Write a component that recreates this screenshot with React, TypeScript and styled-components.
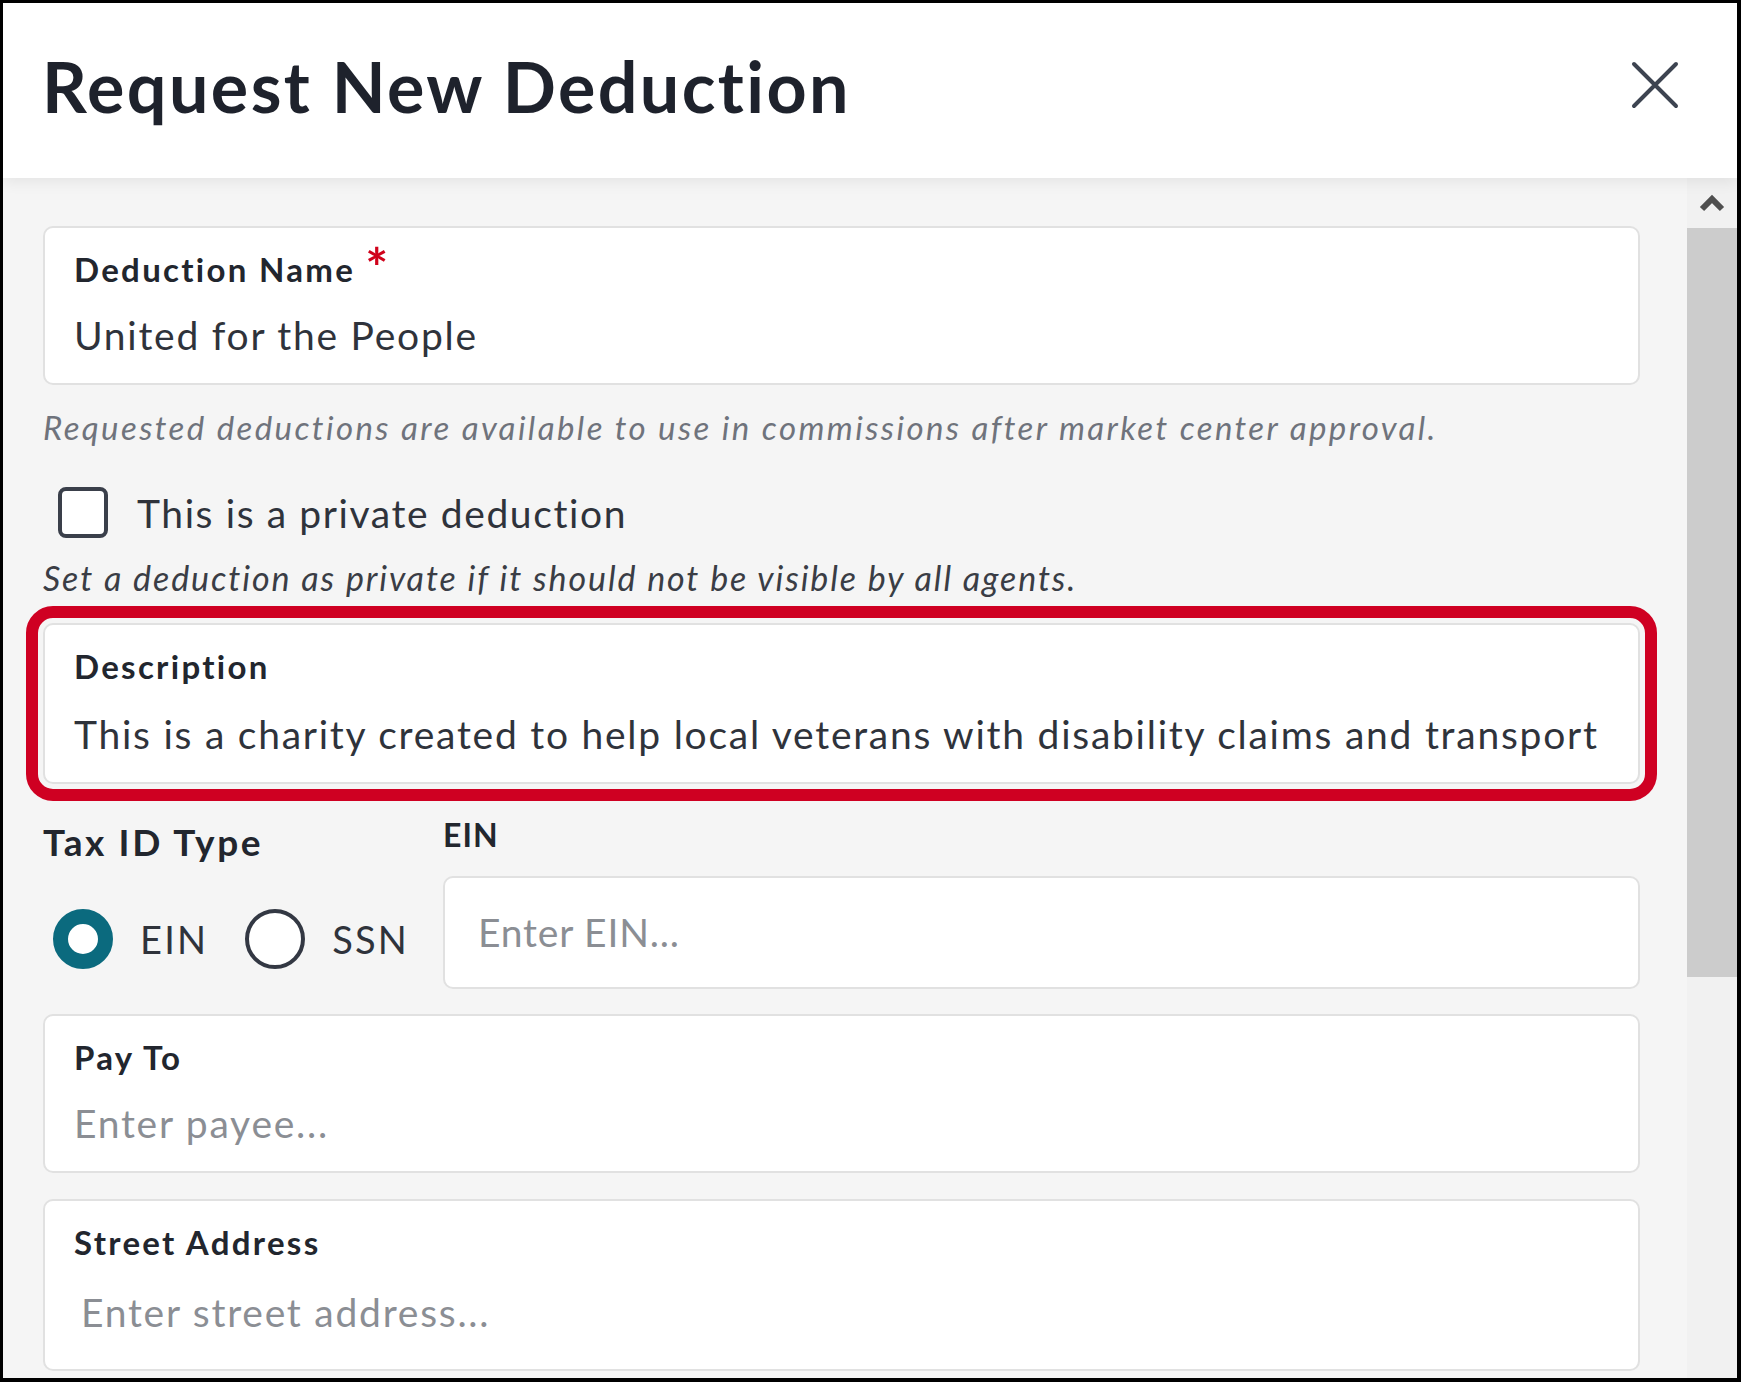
import styled, { createGlobalStyle } from 'styled-components';

const GlobalStyle = createGlobalStyle`
  html, body {
    margin: 0;
    padding: 0;
    background: #fff;
  }
  body {
    font-family: Lato, "Open Sans", sans-serif;
    color: #2f333b;
  }
  * {
    box-sizing: border-box;
  }
`;

// Frame + header
const Frame = styled.div`
  width: 1741px;
  height: 1382px;
  border-style: solid;
  border-color: #000;
  border-width: 3px 4px 4px 3px;
  display: flex;
  flex-direction: column;
  overflow: hidden;
  background: #f5f5f5;
`;

const Header = styled.header`
  flex: none;
  height: 175px;
  background: #fff;
  display: flex;
  justify-content: space-between;
  align-items: flex-start;
  padding: 0 58px 0 39px;
  position: relative;
  z-index: 1;
  box-shadow: 0 4px 14px rgba(0, 0, 0, 0.07);
`;

const Title = styled.h1`
  margin: 48px 0 0;
  font-size: 70px;
  line-height: 70px;
  font-weight: 700;
  letter-spacing: 2.4px;
  color: #1e222c;
`;

const CloseButton = styled.button`
  margin-top: 58px;
  padding: 0;
  border: none;
  background: none;
  width: 48px;
  height: 48px;
  cursor: pointer;
`;

// Body + scrollbar
const Body = styled.div`
  flex: 1;
  display: flex;
  min-height: 0;
`;

const Content = styled.main`
  flex: 1;
  padding: 48px 47px 0 40px;
  overflow: hidden;
`;

const Scrollbar = styled.div`
  flex: none;
  width: 50px;
  background: #f1f1f1;
  display: flex;
  flex-direction: column;
`;

const ScrollArrow = styled.div`
  height: 50px;
  display: flex;
  align-items: center;
  justify-content: center;
`;

const ScrollThumb = styled.div`
  height: 749px;
  background: #cccccc;
`;

// Form parts
const Field = styled.div<{ $highlight?: boolean; $tall?: boolean }>`
  background: #fff;
  border: 2px solid #e1e1e1;
  border-radius: 10px;
  padding: ${(p) => (p.$tall ? '21px 30px 33px 29px' : '21px 30px 24px 29px')};
  ${(p) =>
    p.$highlight &&
    `
    outline: 12px solid #cf0022;
    outline-offset: 5px;
  `}
`;

const Label = styled.div`
  font-size: 33px;
  line-height: 40px;
  font-weight: 700;
  letter-spacing: 2.3px;
  color: #22262e;
  display: flex;
  align-items: flex-start;
`;

const Required = styled.span`
  color: #d0021b;
  font-size: 54px;
  line-height: 40px;
  margin-left: 10px;
  margin-top: -2px;
  letter-spacing: 0;
`;

const Value = styled.div<{ $placeholder?: boolean; $gap?: number; $indent?: number }>`
  margin-top: ${(p) => p.$gap ?? 22}px;
  padding-left: ${(p) => p.$indent ?? 0}px;
  font-size: 39px;
  line-height: 48px;
  letter-spacing: 1.75px;
  color: ${(p) => (p.$placeholder ? '#8b8e94' : '#2f333b')};
  white-space: nowrap;
`;

const Hint = styled.p<{ $dark?: boolean; $top: number }>`
  margin: ${(p) => p.$top}px 0 0 0;
  font-size: ${(p) => (p.$dark ? 34 : 33)}px;
  line-height: 40px;
  font-style: italic;
  letter-spacing: ${(p) => (p.$dark ? 1.9 : 2.4)}px;
  color: ${(p) => (p.$dark ? '#3a3d45' : '#6f737c')};
  white-space: nowrap;
`;

const CheckRow = styled.label`
  margin-top: 40px;
  padding-left: 15px;
  display: flex;
  align-items: center;
  gap: 29px;
  font-size: 39px;
  line-height: 48px;
  letter-spacing: 1.6px;
  color: #2f333b;
`;

const CheckBox = styled.span`
  width: 50px;
  height: 51px;
  border: 4px solid #3a3f4a;
  border-radius: 8px;
  background: #fff;
  flex: none;
`;

const DescriptionWrap = styled.div`
  margin-top: 25px;
`;

const TaxRow = styled.div`
  margin-top: 31px;
  display: grid;
  grid-template-columns: 370px 1fr;
  column-gap: 30px;
  align-items: start;
`;

const TaxTitle = styled.div`
  padding-top: 5px;
  font-size: 37px;
  line-height: 44px;
  font-weight: 700;
  letter-spacing: 2.6px;
  color: #22262e;
`;

const RadioGroup = styled.div`
  margin-top: 44px;
  padding-left: 10px;
  display: flex;
  align-items: center;
  height: 61px;
`;

const RadioDot = styled.span<{ $checked?: boolean }>`
  width: 60px;
  height: 60px;
  border-radius: 50%;
  flex: none;
  background: #fff;
  border: ${(p) => (p.$checked ? '15px solid #0b6a7e' : '4px solid #333843')};
`;

const RadioText = styled.span<{ $gapAfter?: number }>`
  margin-left: 27px;
  margin-right: ${(p) => p.$gapAfter ?? 0}px;
  font-size: 38px;
  line-height: 48px;
  letter-spacing: 2.2px;
  color: #2f333b;
`;

const SubLabel = styled.div`
  font-size: 32px;
  line-height: 40px;
  font-weight: 700;
  letter-spacing: 1px;
  color: #22262e;
`;

const Input = styled.div`
  margin-top: 21px;
  height: 113px;
  background: #fff;
  border: 2px solid #e1e1e1;
  border-radius: 10px;
  padding: 30px 30px 0 33px;
  font-size: 39px;
  line-height: 48px;
  letter-spacing: 0.8px;
  color: #8b8e94;
`;

const Stack = styled.div`
  margin-top: 25px;
  display: flex;
  flex-direction: column;
  gap: 26px;
`;

function CloseIcon() {
  return (
    <svg width="48" height="48" viewBox="0 0 48 48">
      <path d="M3 3 L45 45 M45 3 L3 45" stroke="#3d4451" strokeWidth="4" strokeLinecap="round" fill="none" />
    </svg>
  );
}

function UpChevron() {
  return (
    <svg width="26" height="20" viewBox="0 0 26 20">
      <path d="M3 16 L13 6 L23 16" stroke="#4f4f4f" strokeWidth="6" strokeLinejoin="miter" fill="none" />
    </svg>
  );
}

export default function App() {
  return (
    <>
      <GlobalStyle />
      <Frame>
        <Header>
          <Title>Request New Deduction</Title>
          <CloseButton aria-label="Close">
            <CloseIcon />
          </CloseButton>
        </Header>

        <Body>
          <Content>
            <Field>
              <Label>
                Deduction Name<Required>*</Required>
              </Label>
              <Value>United for the People</Value>
            </Field>

            <Hint $top={22}>
              Requested deductions are available to use in commissions after market center approval.
            </Hint>

            <CheckRow>
              <CheckBox />
              This is a private deduction
            </CheckRow>

            <Hint $dark $top={20}>
              Set a deduction as private if it should not be visible by all agents.
            </Hint>

            <DescriptionWrap>
              <Field $highlight>
                <Label>Description</Label>
                <Value $gap={24}>
                  This is a charity created to help local veterans with disability claims and transport
                </Value>
              </Field>
            </DescriptionWrap>

            <TaxRow>
              <div>
                <TaxTitle>Tax ID Type</TaxTitle>
                <RadioGroup>
                  <RadioDot $checked />
                  <RadioText $gapAfter={37}>EIN</RadioText>
                  <RadioDot />
                  <RadioText>SSN</RadioText>
                </RadioGroup>
              </div>
              <div>
                <SubLabel>EIN</SubLabel>
                <Input>Enter EIN...</Input>
              </div>
            </TaxRow>

            <Stack>
              <Field>
                <Label>Pay To</Label>
                <Value $placeholder>Enter payee...</Value>
              </Field>
              <Field $tall>
                <Label>Street Address</Label>
                <Value $placeholder $gap={26} $indent={7}>
                  Enter street address...
                </Value>
              </Field>
            </Stack>
          </Content>

          <Scrollbar>
            <ScrollArrow>
              <UpChevron />
            </ScrollArrow>
            <ScrollThumb />
          </Scrollbar>
        </Body>
      </Frame>
    </>
  );
}
